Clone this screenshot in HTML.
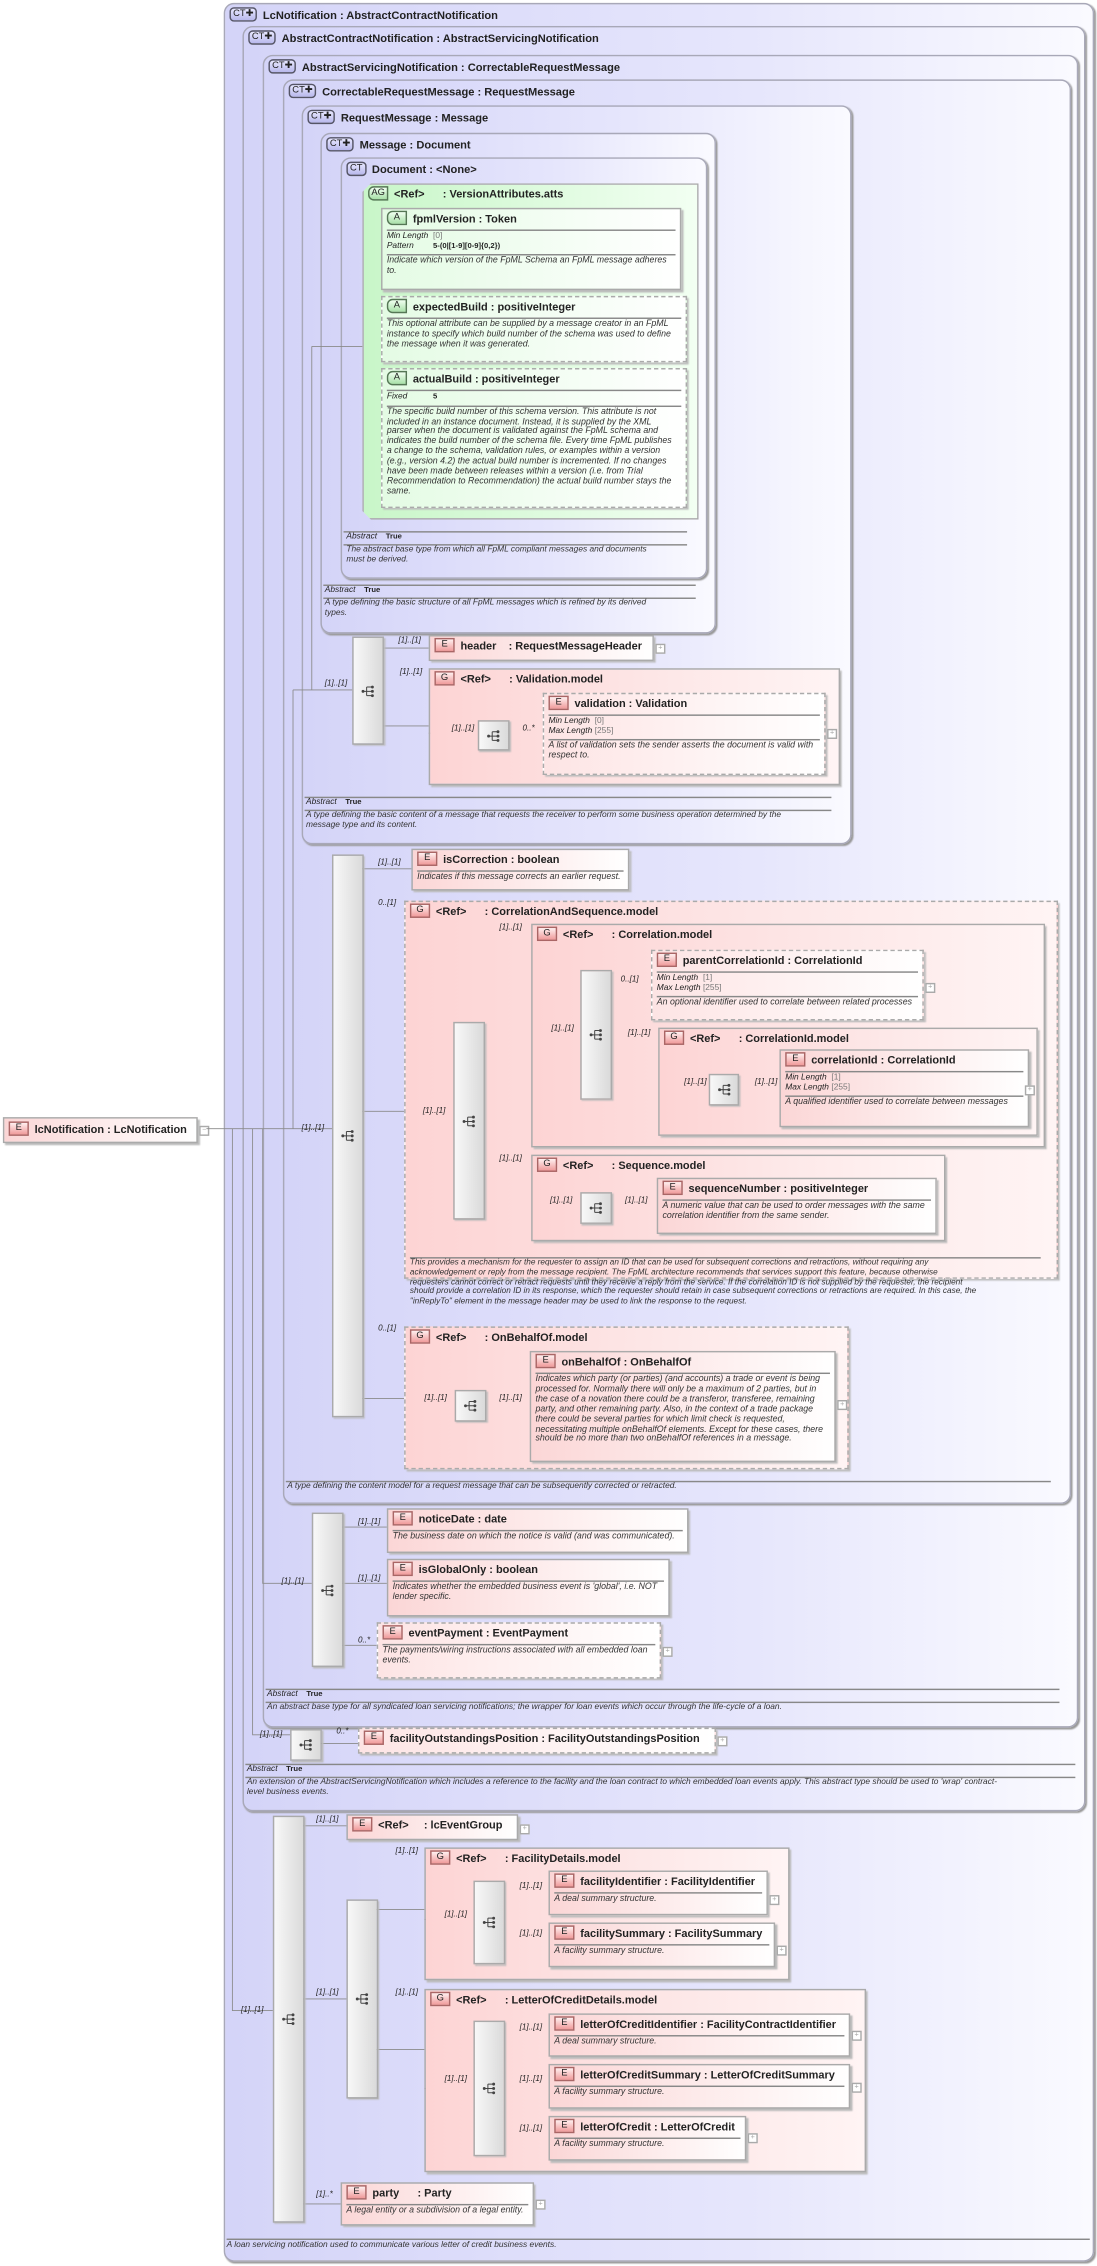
<!DOCTYPE html>
<html><head><meta charset="utf-8">
<style>
html,body{margin:0;padding:0;background:#fff;width:1097px;height:2266px;overflow:hidden}
#c{position:absolute;left:0;top:0;width:760px;height:1570px;transform:scale(1.44342,1.4433);transform-origin:0 0;font-family:"Liberation Sans",sans-serif;color:#222}
.ct{position:absolute;border:1px solid #a8a8b8;border-radius:7px;background:linear-gradient(to right,#d4d4f8,#e6e6fc 60%,#fafaff);box-shadow:1px 1px 1px #999}
.ct>.h{position:absolute;left:3px;top:3px;font-weight:bold;font-size:7.7px;white-space:nowrap;line-height:9px}
.bct{display:inline-block;border:1px solid #556;border-radius:3px;background:linear-gradient(#e8e8ff,#b8b8ec);font-size:6.5px;font-weight:normal;padding:0 1.5px;line-height:8px;margin-right:4px;vertical-align:middle;position:relative;top:-1px}
.el,.gr{position:absolute;border:1px solid #aaa;background:linear-gradient(to right,#fbd6d6,#fff);box-shadow:1.5px 1.5px 1px #bbb;padding:2px 3px;box-sizing:border-box}
.gr{background:linear-gradient(to right,#fdd4d4,#fde8e8 60%,#fff4f4)}
.ag{position:absolute;border:1px solid #aaa;background:linear-gradient(to right,#c8f6c8,#f2fff2);box-shadow:1.5px 1.5px 1px #aaa;padding:2px 3px;box-sizing:border-box;clip-path:polygon(6px 0,100% 0,100% 100%,6px 100%,0 calc(100% - 6px),0 6px)}
.at{position:absolute;border:1px solid #aaa;background:linear-gradient(to right,#e4fbe4,#fff);box-shadow:1.5px 1.5px 1px #bbb;padding:2px 3px;box-sizing:border-box}
.dash{border-style:dashed;border-color:#aaa}
.t{font-weight:bold;font-size:7.6px;white-space:nowrap;line-height:10px}
.b{display:inline-block;border:1px solid #a66;background:linear-gradient(#fff0f0,#f09a9a);font-size:6.5px;font-weight:normal;width:12px;text-align:center;line-height:8px;height:8px;margin-right:4px;vertical-align:middle;position:relative;top:-1px}
.ba{display:inline-block;border:1px solid #575;border-radius:4px 0 0 4px;background:linear-gradient(#f0fff0,#a8e0a8);font-size:6.5px;font-weight:normal;width:12px;text-align:center;line-height:8px;height:8px;margin-right:4px;vertical-align:middle;position:relative;top:-1px}
.ln{border-top:0.7px solid #888;margin:2px 0 1px}
.d{font-style:italic;font-size:6.1px;line-height:6.9px;white-space:nowrap;color:#333}
.p{font-size:5.8px;line-height:6.6px;white-space:nowrap}
.p i{display:inline-block;width:32px}
.p span{color:#777}
.m{position:absolute;font-style:italic;font-size:5.6px;white-space:nowrap;color:#222}
.sq{position:absolute;border:1px solid #aaa;background:linear-gradient(to right,#f8f8f8,#dadada);box-shadow:1px 1px 1px #bbb}
.sq svg{position:absolute;left:50%;top:50%;margin-left:-5px;margin-top:-5px}
.x{position:absolute;width:5px;height:5px;border:0.6px solid #aaa;background:#fff;font-size:5px;line-height:5px;text-align:center;color:#aaa}
.ab{position:absolute;font-size:5.8px;white-space:nowrap}
.ab i{margin-right:6px}
.ab b{font-size:5.3px}
.dl{position:absolute;border-top:0.7px solid #888}
</style></head><body>
<div id="c">

<div class="el" style="left:2px;top:774px;width:135px;height:18px;padding-top:3px"><div class="t"><span class="b">E</span>lcNotification : LcNotification</div></div>
<div class="x" style="left:138px;top:780px">−</div>

<div class="ct" style="left:155px;top:2px;width:601px;height:1563px"><div class="h"><span class="bct">CT✚</span>LcNotification : AbstractContractNotification</div></div>
<div class="dl" style="left:157px;top:1551px;width:598px"></div>
<div class="ab d" style="left:157px;top:1553px">A loan servicing notification used to communicate various letter of credit business events.</div>

<div class="ct" style="left:168px;top:18px;width:582px;height:1235px"><div class="h"><span class="bct">CT✚</span>AbstractContractNotification : AbstractServicingNotification</div></div>
<div class="dl" style="left:170px;top:1222px;width:575px"></div>
<div class="ab" style="left:171px;top:1223px"><i>Abstract</i><b>True</b></div>
<div class="dl" style="left:170px;top:1231px;width:575px"></div>
<div class="ab d" style="left:171px;top:1232px">An extension of the AbstractServicingNotification which includes a reference to the facility and the loan contract to which embedded loan events apply. This abstract type should be used to 'wrap' contract-<br>level business events.</div>

<div class="ct" style="left:182px;top:38px;width:563px;height:1157px"><div class="h"><span class="bct">CT✚</span>AbstractServicingNotification : CorrectableRequestMessage</div></div>
<div class="dl" style="left:184px;top:1170px;width:550px"></div>
<div class="ab" style="left:185px;top:1171px"><i>Abstract</i><b>True</b></div>
<div class="dl" style="left:184px;top:1179px;width:550px"></div>
<div class="ab d" style="left:185px;top:1180px">An abstract base type for all syndicated loan servicing notifications; the wrapper for loan events which occur through the life-cycle of a loan.</div>

<div class="ct" style="left:196px;top:55px;width:544px;height:985px"><div class="h"><span class="bct">CT✚</span>CorrectableRequestMessage : RequestMessage</div></div>
<div class="dl" style="left:198px;top:1026px;width:530px"></div>
<div class="ab d" style="left:199px;top:1027px">A type defining the content model for a request message that can be subsequently corrected or retracted.</div>

<div class="ct" style="left:209px;top:73px;width:379px;height:510px"><div class="h"><span class="bct">CT✚</span>RequestMessage : Message</div></div>
<div class="dl" style="left:211px;top:552px;width:365px"></div>
<div class="ab" style="left:212px;top:553px"><i>Abstract</i><b>True</b></div>
<div class="dl" style="left:211px;top:561px;width:365px"></div>
<div class="ab d" style="left:212px;top:562px">A type defining the basic content of a message that requests the receiver to perform some business operation determined by the<br>message type and its content.</div>

<div class="ct" style="left:222px;top:92px;width:272px;height:345px"><div class="h"><span class="bct">CT✚</span>Message : Document</div></div>
<div class="dl" style="left:224px;top:405px;width:258px"></div>
<div class="ab" style="left:225px;top:406px"><i>Abstract</i><b>True</b></div>
<div class="dl" style="left:224px;top:414px;width:258px"></div>
<div class="ab d" style="left:225px;top:415px">A type defining the basic structure of all FpML messages which is refined by its derived<br>types.</div>

<div class="ct" style="left:236px;top:109px;width:252px;height:290px"><div class="h"><span class="bct">CT</span>Document : &lt;None&gt;</div></div>
<div class="dl" style="left:238px;top:368px;width:238px"></div>
<div class="ab" style="left:240px;top:369px"><i>Abstract</i><b>True</b></div>
<div class="dl" style="left:238px;top:377px;width:238px"></div>
<div class="ab d" style="left:240px;top:378px">The abstract base type from which all FpML compliant messages and documents<br>must be derived.</div>

<svg style="position:absolute;left:0;top:0" width="760" height="1570" viewBox="0 0 760 1570">
<g stroke="#8a8a8a" stroke-width="0.6" fill="none">
<path d="M143 782H230"/>
<path d="M161 782V1393H189"/>
<path d="M175 782V1202H201"/>
<path d="M182 782V1097H216"/>
<path d="M203 478V782"/><path d="M203 478H244"/>
<path d="M216 240V478"/><path d="M216 240H251"/>
<path d="M258 172V300"/><path d="M258 172H264"/><path d="M258 228H264"/><path d="M258 300H264"/>
<path d="M264 449H297"/><path d="M264 503H297"/>
<path d="M297 508H331"/><path d="M351 508H376"/>
<path d="M250 602H285"/><path d="M250 770H280"/><path d="M250 969H280"/>
<path d="M280 775H314"/><path d="M334 718H368"/><path d="M334 832H368"/>
<path d="M368 715H402"/><path d="M422 681H451"/><path d="M422 749H456"/>
<path d="M456 754H491"/><path d="M510 754H540"/>
<path d="M368 836H402"/><path d="M422 836H455"/>
<path d="M280 973H315"/><path d="M335 973H367"/>
<path d="M236 1058H268"/><path d="M236 1097H268"/><path d="M236 1140H261"/>
<path d="M221 1208H248"/>
<path d="M209 1265H240"/><path d="M209 1385H240"/><path d="M209 1527H236"/>
<path d="M260 1323H294"/><path d="M260 1420H294"/>
<path d="M294 1330H328"/><path d="M348 1311H380"/><path d="M348 1345H380"/>
<path d="M294 1447H328"/><path d="M348 1409H380"/><path d="M348 1445H380"/><path d="M348 1480H380"/>
</g></svg>

<div class="ag" style="left:251px;top:127px;width:233px;height:233px"><div class="t"><span class="ba">AG</span>&lt;Ref&gt; &nbsp; &nbsp; &nbsp;: VersionAttributes.atts</div></div>
<div class="at" style="left:264px;top:144px;width:208px;height:57px"><div class="t"><span class="ba">A</span>fpmlVersion : Token</div><div class="ln"></div>
<div class="p"><i>Min Length</i><span>[0]</span><br><i>Pattern</i><b style="font-size:5.3px">5-(0|[1-9][0-9]{0,2})</b></div><div class="ln"></div>
<div class="d">Indicate which version of the FpML Schema an FpML message adheres<br>to.</div></div>
<div class="at dash" style="left:264px;top:205px;width:212px;height:46px"><div class="t"><span class="ba">A</span>expectedBuild : positiveInteger</div><div class="ln"></div>
<div class="d">This optional attribute can be supplied by a message creator in an FpML<br>instance to specify which build number of the schema was used to define<br>the message when it was generated.</div></div>
<div class="at dash" style="left:264px;top:255px;width:212px;height:97px"><div class="t"><span class="ba">A</span>actualBuild : positiveInteger</div><div class="ln"></div>
<div class="p"><i>Fixed</i><b style="font-size:5.3px">5</b></div><div class="ln"></div>
<div class="d">The specific build number of this schema version. This attribute is not<br>included in an instance document. Instead, it is supplied by the XML<br>parser when the document is validated against the FpML schema and<br>indicates the build number of the schema file. Every time FpML publishes<br>a change to the schema, validation rules, or examples within a version<br>(e.g., version 4.2) the actual build number is incremented. If no changes<br>have been made between releases within a version (i.e. from Trial<br>Recommendation to Recommendation) the actual build number stays the<br>same.</div></div>

<div class="sq" style="left:244px;top:441px;width:20px;height:73px"><svg width="10" height="10" viewBox="0 0 10 10"><path d="M1 5H4M4 2V8M4 2H8M4 5H8M4 8H8" stroke="#444" stroke-width=".7" fill="none"/><circle cx="1.5" cy="5" r="1" fill="#444"/><circle cx="8" cy="2" r="1" fill="#444"/><circle cx="8" cy="5" r="1" fill="#444"/><circle cx="8" cy="8" r="1" fill="#444"/></svg></div>
<div class="m" style="left:225px;top:471px">[1]..[1]</div>
<div class="m" style="left:276px;top:441px">[1]..[1]</div>
<div class="el" style="left:297px;top:440px;width:156px;height:18px"><div class="t"><span class="b">E</span>header &nbsp; &nbsp;: RequestMessageHeader</div></div>
<div class="x" style="left:454px;top:446px">+</div>
<div class="m" style="left:277px;top:463px">[1]..[1]</div>
<div class="gr" style="left:297px;top:463px;width:285px;height:81px"><div class="t"><span class="b">G</span>&lt;Ref&gt; &nbsp; &nbsp; &nbsp;: Validation.model</div></div>
<div class="m" style="left:313px;top:502px">[1]..[1]</div>
<div class="sq" style="left:331px;top:499px;width:20px;height:19px"><svg width="10" height="10" viewBox="0 0 10 10"><path d="M1 5H4M4 2V8M4 2H8M4 5H8M4 8H8" stroke="#444" stroke-width=".7" fill="none"/><circle cx="1.5" cy="5" r="1" fill="#444"/><circle cx="8" cy="2" r="1" fill="#444"/><circle cx="8" cy="5" r="1" fill="#444"/><circle cx="8" cy="8" r="1" fill="#444"/></svg></div>
<div class="m" style="left:362px;top:502px">0..*</div>
<div class="el dash" style="left:376px;top:480px;width:196px;height:57px;background:linear-gradient(to right,#fde4e4,#fff)"><div class="t"><span class="b">E</span>validation : Validation</div><div class="ln"></div>
<div class="p"><i>Min Length</i><span>[0]</span><br><i>Max Length</i><span>[255]</span></div><div class="ln"></div>
<div class="d">A list of validation sets the sender asserts the document is valid with<br>respect to.</div></div>
<div class="x" style="left:573px;top:505px">+</div>

<div class="m" style="left:209px;top:779px">[1]..[1]</div>
<div class="sq" style="left:230px;top:592px;width:20px;height:388px"><svg width="10" height="10" viewBox="0 0 10 10"><path d="M1 5H4M4 2V8M4 2H8M4 5H8M4 8H8" stroke="#444" stroke-width=".7" fill="none"/><circle cx="1.5" cy="5" r="1" fill="#444"/><circle cx="8" cy="2" r="1" fill="#444"/><circle cx="8" cy="5" r="1" fill="#444"/><circle cx="8" cy="8" r="1" fill="#444"/></svg></div>
<div class="m" style="left:262px;top:595px">[1]..[1]</div>
<div class="el" style="left:285px;top:588px;width:151px;height:29px"><div class="t"><span class="b">E</span>isCorrection : boolean</div><div class="ln"></div><div class="d">Indicates if this message corrects an earlier request.</div></div>
<div class="m" style="left:262px;top:623px">0..[1]</div>
<div class="gr dash" style="left:280px;top:624px;width:453px;height:262px"><div class="t"><span class="b">G</span>&lt;Ref&gt; &nbsp; &nbsp; &nbsp;: CorrelationAndSequence.model</div></div>
<div class="dl" style="left:284px;top:871px;width:437px"></div>
<div class="ab d" style="left:284px;top:872px;font-size:5.7px;line-height:6.8px">This provides a mechanism for the requester to assign an ID that can be used for subsequent corrections and retractions, without requiring any<br>acknowledgement or reply from the message recipient. The FpML architecture recommends that services support this feature, because otherwise<br>requesters cannot correct or retract requests until they receive a reply from the service. If the correlation ID is not supplied by the requester, the recipient<br>should provide a correlation ID in its response, which the requester should retain in case subsequent corrections or retractions are required. In this case, the<br>"inReplyTo" element in the message header may be used to link the response to the request.</div>
<div class="m" style="left:293px;top:767px">[1]..[1]</div>
<div class="sq" style="left:314px;top:708px;width:20px;height:135px"><svg width="10" height="10" viewBox="0 0 10 10"><path d="M1 5H4M4 2V8M4 2H8M4 5H8M4 8H8" stroke="#444" stroke-width=".7" fill="none"/><circle cx="1.5" cy="5" r="1" fill="#444"/><circle cx="8" cy="2" r="1" fill="#444"/><circle cx="8" cy="5" r="1" fill="#444"/><circle cx="8" cy="8" r="1" fill="#444"/></svg></div>
<div class="m" style="left:346px;top:640px">[1]..[1]</div>
<div class="gr" style="left:368px;top:640px;width:356px;height:155px"><div class="t"><span class="b">G</span>&lt;Ref&gt; &nbsp; &nbsp; &nbsp;: Correlation.model</div></div>
<div class="m" style="left:382px;top:710px">[1]..[1]</div>
<div class="sq" style="left:402px;top:672px;width:20px;height:88px"><svg width="10" height="10" viewBox="0 0 10 10"><path d="M1 5H4M4 2V8M4 2H8M4 5H8M4 8H8" stroke="#444" stroke-width=".7" fill="none"/><circle cx="1.5" cy="5" r="1" fill="#444"/><circle cx="8" cy="2" r="1" fill="#444"/><circle cx="8" cy="5" r="1" fill="#444"/><circle cx="8" cy="8" r="1" fill="#444"/></svg></div>
<div class="m" style="left:430px;top:676px">0..[1]</div>
<div class="el dash" style="left:451px;top:658px;width:189px;height:49px;background:linear-gradient(to right,#fde4e4,#fff)"><div class="t"><span class="b">E</span>parentCorrelationId : CorrelationId</div><div class="ln"></div>
<div class="p"><i>Min Length</i><span>[1]</span><br><i>Max Length</i><span>[255]</span></div><div class="ln"></div>
<div class="d">An optional identifier used to correlate between related processes</div></div>
<div class="x" style="left:641px;top:681px">+</div>
<div class="m" style="left:435px;top:713px">[1]..[1]</div>
<div class="gr" style="left:456px;top:712px;width:263px;height:75px"><div class="t"><span class="b">G</span>&lt;Ref&gt; &nbsp; &nbsp; &nbsp;: CorrelationId.model</div></div>
<div class="m" style="left:474px;top:747px">[1]..[1]</div>
<div class="sq" style="left:491px;top:744px;width:19px;height:20px"><svg width="10" height="10" viewBox="0 0 10 10"><path d="M1 5H4M4 2V8M4 2H8M4 5H8M4 8H8" stroke="#444" stroke-width=".7" fill="none"/><circle cx="1.5" cy="5" r="1" fill="#444"/><circle cx="8" cy="2" r="1" fill="#444"/><circle cx="8" cy="5" r="1" fill="#444"/><circle cx="8" cy="8" r="1" fill="#444"/></svg></div>
<div class="m" style="left:523px;top:747px">[1]..[1]</div>
<div class="el" style="left:540px;top:727px;width:173px;height:54px"><div class="t"><span class="b">E</span>correlationId : CorrelationId</div><div class="ln"></div>
<div class="p"><i>Min Length</i><span>[1]</span><br><i>Max Length</i><span>[255]</span></div><div class="ln"></div>
<div class="d">A qualified identifier used to correlate between messages</div></div>
<div class="x" style="left:710px;top:752px">+</div>
<div class="m" style="left:346px;top:800px">[1]..[1]</div>
<div class="gr" style="left:368px;top:800px;width:287px;height:60px"><div class="t"><span class="b">G</span>&lt;Ref&gt; &nbsp; &nbsp; &nbsp;: Sequence.model</div></div>
<div class="m" style="left:381px;top:829px">[1]..[1]</div>
<div class="sq" style="left:402px;top:826px;width:20px;height:20px"><svg width="10" height="10" viewBox="0 0 10 10"><path d="M1 5H4M4 2V8M4 2H8M4 5H8M4 8H8" stroke="#444" stroke-width=".7" fill="none"/><circle cx="1.5" cy="5" r="1" fill="#444"/><circle cx="8" cy="2" r="1" fill="#444"/><circle cx="8" cy="5" r="1" fill="#444"/><circle cx="8" cy="8" r="1" fill="#444"/></svg></div>
<div class="m" style="left:433px;top:829px">[1]..[1]</div>
<div class="el" style="left:455px;top:816px;width:194px;height:39px"><div class="t"><span class="b">E</span>sequenceNumber : positiveInteger</div><div class="ln"></div>
<div class="d">A numeric value that can be used to order messages with the same<br>correlation identifier from the same sender.</div></div>

<div class="m" style="left:262px;top:918px">0..[1]</div>
<div class="gr dash" style="left:280px;top:919px;width:308px;height:99px"><div class="t"><span class="b">G</span>&lt;Ref&gt; &nbsp; &nbsp; &nbsp;: OnBehalfOf.model</div></div>
<div class="m" style="left:294px;top:966px">[1]..[1]</div>
<div class="sq" style="left:315px;top:963px;width:20px;height:20px"><svg width="10" height="10" viewBox="0 0 10 10"><path d="M1 5H4M4 2V8M4 2H8M4 5H8M4 8H8" stroke="#444" stroke-width=".7" fill="none"/><circle cx="1.5" cy="5" r="1" fill="#444"/><circle cx="8" cy="2" r="1" fill="#444"/><circle cx="8" cy="5" r="1" fill="#444"/><circle cx="8" cy="8" r="1" fill="#444"/></svg></div>
<div class="m" style="left:346px;top:966px">[1]..[1]</div>
<div class="el" style="left:367px;top:936px;width:212px;height:77px"><div class="t"><span class="b">E</span>onBehalfOf : OnBehalfOf</div><div class="ln"></div>
<div class="d">Indicates which party (or parties) (and accounts) a trade or event is being<br>processed for. Normally there will only be a maximum of 2 parties, but in<br>the case of a novation there could be a transferor, transferee, remaining<br>party, and other remaining party. Also, in the context of a trade package<br>there could be several parties for which limit check is requested,<br>necessitating multiple onBehalfOf elements. Except for these cases, there<br>should be no more than two onBehalfOf references in a message.</div></div>
<div class="x" style="left:580px;top:970px">+</div>

<div class="m" style="left:195px;top:1093px">[1]..[1]</div>
<div class="sq" style="left:216px;top:1048px;width:20px;height:105px"><svg width="10" height="10" viewBox="0 0 10 10"><path d="M1 5H4M4 2V8M4 2H8M4 5H8M4 8H8" stroke="#444" stroke-width=".7" fill="none"/><circle cx="1.5" cy="5" r="1" fill="#444"/><circle cx="8" cy="2" r="1" fill="#444"/><circle cx="8" cy="5" r="1" fill="#444"/><circle cx="8" cy="8" r="1" fill="#444"/></svg></div>
<div class="m" style="left:248px;top:1052px">[1]..[1]</div>
<div class="el" style="left:268px;top:1045px;width:209px;height:31px"><div class="t"><span class="b">E</span>noticeDate : date</div><div class="ln"></div><div class="d">The business date on which the notice is valid (and was communicated).</div></div>
<div class="m" style="left:248px;top:1091px">[1]..[1]</div>
<div class="el" style="left:268px;top:1080px;width:196px;height:40px"><div class="t"><span class="b">E</span>isGlobalOnly : boolean</div><div class="ln"></div><div class="d">Indicates whether the embedded business event is 'global', i.e. NOT<br>lender specific.</div></div>
<div class="m" style="left:248px;top:1134px">0..*</div>
<div class="el dash" style="left:261px;top:1124px;width:197px;height:39px;background:linear-gradient(to right,#fde4e4,#fff)"><div class="t"><span class="b">E</span>eventPayment : EventPayment</div><div class="ln"></div><div class="d">The payments/wiring instructions associated with all embedded loan<br>events.</div></div>
<div class="x" style="left:459px;top:1141px">+</div>

<div class="m" style="left:180px;top:1199px">[1]..[1]</div>
<div class="sq" style="left:201px;top:1198px;width:20px;height:20px"><svg width="10" height="10" viewBox="0 0 10 10"><path d="M1 5H4M4 2V8M4 2H8M4 5H8M4 8H8" stroke="#444" stroke-width=".7" fill="none"/><circle cx="1.5" cy="5" r="1" fill="#444"/><circle cx="8" cy="2" r="1" fill="#444"/><circle cx="8" cy="5" r="1" fill="#444"/><circle cx="8" cy="8" r="1" fill="#444"/></svg></div>
<div class="m" style="left:233px;top:1197px">0..*</div>
<div class="el dash" style="left:248px;top:1197px;width:248px;height:18px;background:linear-gradient(to right,#fde4e4,#fff)"><div class="t"><span class="b">E</span>facilityOutstandingsPosition : FacilityOutstandingsPosition</div></div>
<div class="x" style="left:497px;top:1203px">+</div>

<div class="m" style="left:167px;top:1390px">[1]..[1]</div>
<div class="sq" style="left:189px;top:1258px;width:20px;height:280px"><svg width="10" height="10" viewBox="0 0 10 10"><path d="M1 5H4M4 2V8M4 2H8M4 5H8M4 8H8" stroke="#444" stroke-width=".7" fill="none"/><circle cx="1.5" cy="5" r="1" fill="#444"/><circle cx="8" cy="2" r="1" fill="#444"/><circle cx="8" cy="5" r="1" fill="#444"/><circle cx="8" cy="8" r="1" fill="#444"/></svg></div>
<div class="m" style="left:219px;top:1258px">[1]..[1]</div>
<div class="el" style="left:240px;top:1257px;width:119px;height:18px"><div class="t"><span class="b">E</span>&lt;Ref&gt; &nbsp; &nbsp; : lcEventGroup</div></div>
<div class="x" style="left:360px;top:1264px">+</div>
<div class="m" style="left:219px;top:1378px">[1]..[1]</div>
<div class="sq" style="left:240px;top:1316px;width:20px;height:136px"><svg width="10" height="10" viewBox="0 0 10 10"><path d="M1 5H4M4 2V8M4 2H8M4 5H8M4 8H8" stroke="#444" stroke-width=".7" fill="none"/><circle cx="1.5" cy="5" r="1" fill="#444"/><circle cx="8" cy="2" r="1" fill="#444"/><circle cx="8" cy="5" r="1" fill="#444"/><circle cx="8" cy="8" r="1" fill="#444"/></svg></div>
<div class="m" style="left:274px;top:1280px">[1]..[1]</div>
<div class="gr" style="left:294px;top:1280px;width:253px;height:92px"><div class="t"><span class="b">G</span>&lt;Ref&gt; &nbsp; &nbsp; &nbsp;: FacilityDetails.model</div></div>
<div class="m" style="left:308px;top:1324px">[1]..[1]</div>
<div class="sq" style="left:328px;top:1303px;width:20px;height:56px"><svg width="10" height="10" viewBox="0 0 10 10"><path d="M1 5H4M4 2V8M4 2H8M4 5H8M4 8H8" stroke="#444" stroke-width=".7" fill="none"/><circle cx="1.5" cy="5" r="1" fill="#444"/><circle cx="8" cy="2" r="1" fill="#444"/><circle cx="8" cy="5" r="1" fill="#444"/><circle cx="8" cy="8" r="1" fill="#444"/></svg></div>
<div class="m" style="left:360px;top:1304px">[1]..[1]</div>
<div class="el" style="left:380px;top:1296px;width:152px;height:31px"><div class="t"><span class="b">E</span>facilityIdentifier : FacilityIdentifier</div><div class="ln"></div><div class="d">A deal summary structure.</div></div>
<div class="x" style="left:533px;top:1313px">+</div>
<div class="m" style="left:360px;top:1337px">[1]..[1]</div>
<div class="el" style="left:380px;top:1332px;width:157px;height:31px"><div class="t"><span class="b">E</span>facilitySummary : FacilitySummary</div><div class="ln"></div><div class="d">A facility summary structure.</div></div>
<div class="x" style="left:538px;top:1348px">+</div>
<div class="m" style="left:274px;top:1378px">[1]..[1]</div>
<div class="gr" style="left:294px;top:1378px;width:306px;height:127px"><div class="t"><span class="b">G</span>&lt;Ref&gt; &nbsp; &nbsp; &nbsp;: LetterOfCreditDetails.model</div></div>
<div class="m" style="left:308px;top:1438px">[1]..[1]</div>
<div class="sq" style="left:328px;top:1400px;width:20px;height:92px"><svg width="10" height="10" viewBox="0 0 10 10"><path d="M1 5H4M4 2V8M4 2H8M4 5H8M4 8H8" stroke="#444" stroke-width=".7" fill="none"/><circle cx="1.5" cy="5" r="1" fill="#444"/><circle cx="8" cy="2" r="1" fill="#444"/><circle cx="8" cy="5" r="1" fill="#444"/><circle cx="8" cy="8" r="1" fill="#444"/></svg></div>
<div class="m" style="left:360px;top:1402px">[1]..[1]</div>
<div class="el" style="left:380px;top:1395px;width:209px;height:30px"><div class="t"><span class="b">E</span>letterOfCreditIdentifier : FacilityContractIdentifier</div><div class="ln"></div><div class="d">A deal summary structure.</div></div>
<div class="x" style="left:590px;top:1407px">+</div>
<div class="m" style="left:360px;top:1438px">[1]..[1]</div>
<div class="el" style="left:380px;top:1430px;width:209px;height:31px"><div class="t"><span class="b">E</span>letterOfCreditSummary : LetterOfCreditSummary</div><div class="ln"></div><div class="d">A facility summary structure.</div></div>
<div class="x" style="left:590px;top:1443px">+</div>
<div class="m" style="left:360px;top:1472px">[1]..[1]</div>
<div class="el" style="left:380px;top:1466px;width:137px;height:31px"><div class="t"><span class="b">E</span>letterOfCredit : LetterOfCredit</div><div class="ln"></div><div class="d">A facility summary structure.</div></div>
<div class="x" style="left:518px;top:1478px">+</div>
<div class="m" style="left:219px;top:1518px">[1]..*</div>
<div class="el" style="left:236px;top:1512px;width:134px;height:30px"><div class="t"><span class="b">E</span>party &nbsp; &nbsp; &nbsp;: Party</div><div class="ln"></div><div class="d">A legal entity or a subdivision of a legal entity.</div></div>
<div class="x" style="left:371px;top:1524px">+</div>

</div>
</body></html>
